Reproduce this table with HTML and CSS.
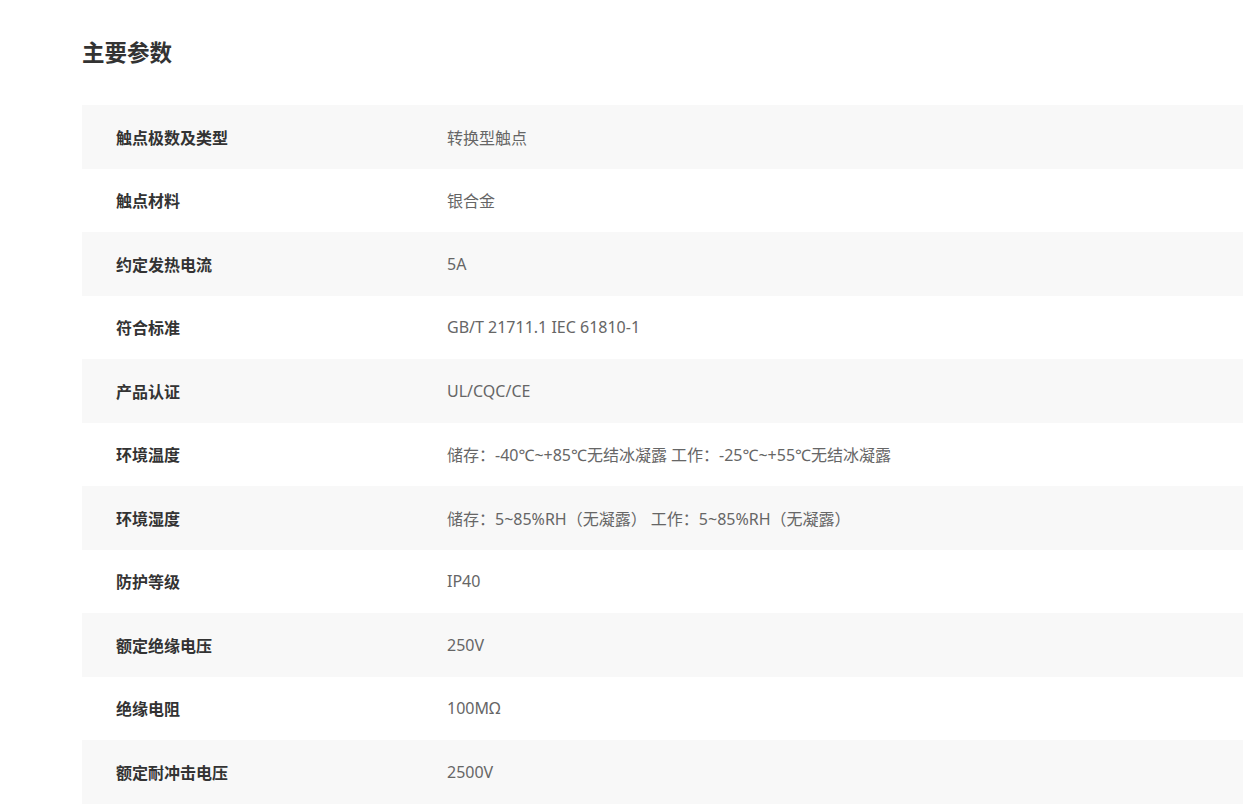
FILE: index.html
```html
<!DOCTYPE html>
<html lang="zh-CN">
<head>
  <meta charset="UTF-8">
  <meta name="viewport" content="width=device-width, initial-scale=1.0">
  <title>主要参数</title>
  <link rel="stylesheet" href="styles.css">
</head>
<body>
  <section class="params">
    <h2 class="params-title">主要参数</h2>
    <div class="params-table">
      <div class="row"><div class="label">触点极数及类型</div><div class="value">转换型触点</div></div>
      <div class="row"><div class="label">触点材料</div><div class="value">银合金</div></div>
      <div class="row"><div class="label">约定发热电流</div><div class="value">5A</div></div>
      <div class="row"><div class="label">符合标准</div><div class="value">GB/T 21711.1 IEC 61810-1</div></div>
      <div class="row"><div class="label">产品认证</div><div class="value">UL/CQC/CE</div></div>
      <div class="row"><div class="label">环境温度</div><div class="value">储存：-40℃~+85℃无结冰凝露 工作：-25℃~+55℃无结冰凝露</div></div>
      <div class="row"><div class="label">环境湿度</div><div class="value">储存：5~85%RH（无凝露） 工作：5~85%RH（无凝露）</div></div>
      <div class="row"><div class="label">防护等级</div><div class="value">IP40</div></div>
      <div class="row"><div class="label">额定绝缘电压</div><div class="value">250V</div></div>
      <div class="row"><div class="label">绝缘电阻</div><div class="value">100MΩ</div></div>
      <div class="row"><div class="label">额定耐冲击电压</div><div class="value">2500V</div></div>
    </div>
  </section>
</body>
</html>
```

FILE: styles.css
```css
body {
  margin: 0;
  background: #fff;
  font-family: "Noto Sans", "Noto Sans CJK SC", sans-serif;
  color: #333;
}
.params {
  padding: 35px 0 0 82px;
}
.params-title {
  margin: 0 0 34px;
  font-size: 22.5px;
  line-height: 36px;
  font-weight: bold;
  color: #333;
}
.params-table {
  width: 100%;
}
.row {
  display: grid;
  grid-template-columns: 365px 1fr;
  align-items: center;
  height: 63.5px;
  font-size: 16px;
}
.row:nth-child(odd) {
  background: #f8f8f8;
}
.label {
  padding-left: 34px;
  font-weight: bold;
  color: #333;
}
.value {
  color: #666;
}
```
